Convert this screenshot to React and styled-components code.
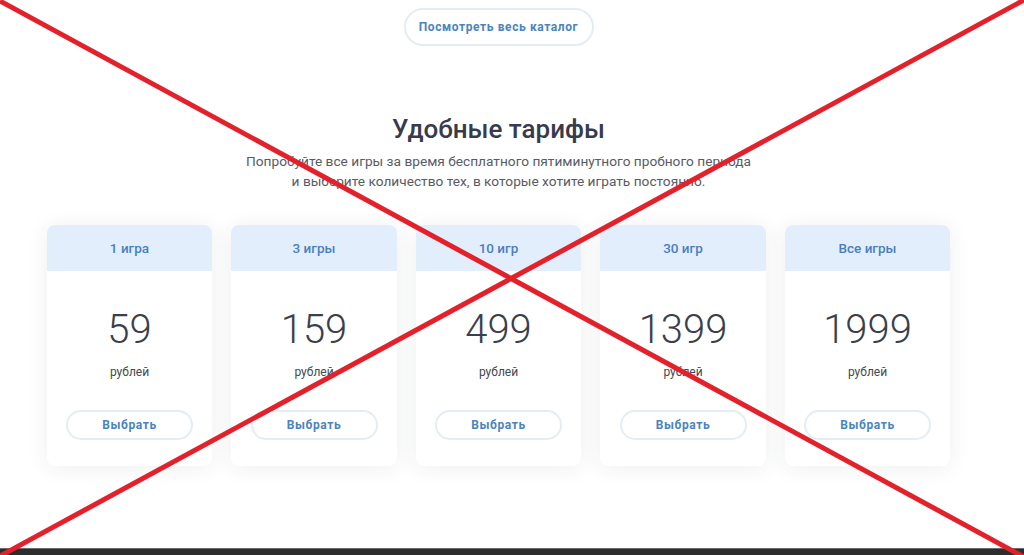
import React from 'react';
import styled, { createGlobalStyle } from 'styled-components';

const GlobalStyle = createGlobalStyle`
  html, body {
    margin: 0;
    padding: 0;
    background: #ffffff;
    font-family: Roboto, "Noto Sans", "Liberation Sans", sans-serif;
  }
`;

const plans = [
  { title: '1 игра', price: 59 },
  { title: '3 игры', price: 159 },
  { title: '10 игр', price: 499 },
  { title: '30 игр', price: 1399 },
  { title: 'Все игры', price: 1999 },
];

const StyledPage = styled.div`
  position: relative;
  width: 1024px;
  height: 555px;
  overflow: hidden;
  display: flex;
  flex-direction: column;
`;

const StyledSection = styled.section`
  width: 997px;
  flex: 1;
  display: flex;
  flex-direction: column;
  align-items: center;
  padding-top: 8px;
`;

const StyledPillButton = styled.button`
  display: flex;
  align-items: center;
  justify-content: center;
  width: ${props => props.$width}px;
  height: ${props => props.$height}px;
  padding: 0;
  background: #ffffff;
  border: 2px solid #e4edf4;
  border-radius: 20px;
  color: #4a84c0;
  font-family: Roboto, "Noto Sans", sans-serif;
  font-size: 12px;
  font-weight: 700;
  letter-spacing: 0.6px;
  cursor: pointer;
`;

const StyledTitle = styled.h2`
  margin: 66px 0 0;
  font-size: 26px;
  line-height: 34px;
  font-weight: 500;
  color: #373b4c;
`;

const StyledLead = styled.p`
  margin: 5px 0 0;
  font-size: 13.7px;
  line-height: 20px;
  color: #575b66;
  text-align: center;
`;

const StyledCards = styled.div`
  display: grid;
  grid-template-columns: repeat(5, 165.5px);
  gap: 19px;
  margin-top: 34px;
`;

const StyledCard = styled.div`
  height: 241px;
  background: #ffffff;
  border-radius: 8px;
  overflow: hidden;
  box-shadow: 0 2px 22px rgba(40, 50, 70, 0.08);
  display: flex;
  flex-direction: column;
  align-items: center;
`;

const StyledCardHead = styled.div`
  align-self: stretch;
  height: 46px;
  display: flex;
  align-items: center;
  justify-content: center;
  background: #e3eefd;
  color: #4a7fbf;
  font-size: 13.5px;
  font-weight: 500;
`;

const StyledPrice = styled.div`
  margin-top: 39px;
  font-size: 40px;
  line-height: 40px;
  font-weight: 300;
  color: #3b3f4d;
`;

const StyledCurrency = styled.div`
  margin-top: 14px;
  font-size: 12px;
  line-height: 16px;
  color: #444850;
`;

const StyledChoose = styled(StyledPillButton)`
  margin-top: 30px;
`;

const StyledFooterBar = styled.div`
  height: 6px;
  background: #2d2d2d;
  border-top: 1px solid #6b6b6b;
`;

const StyledCross = styled.svg`
  position: absolute;
  left: 0;
  top: 0;
  pointer-events: none;
`;

const App = () => (
  <StyledPage>
    <GlobalStyle />
    <StyledSection>
      <StyledPillButton $width={190} $height={38}>Посмотреть весь каталог</StyledPillButton>
      <StyledTitle>Удобные тарифы</StyledTitle>
      <StyledLead>
        Попробуйте все игры за время бесплатного пятиминутного пробного периода
        <br />
        и выберите количество тех, в которые хотите играть постоянно.
      </StyledLead>
      <StyledCards>
        {plans.map(plan => (
          <StyledCard key={plan.title}>
            <StyledCardHead>{plan.title}</StyledCardHead>
            <StyledPrice>{plan.price}</StyledPrice>
            <StyledCurrency>рублей</StyledCurrency>
            <StyledChoose $width={127} $height={30}>Выбрать</StyledChoose>
          </StyledCard>
        ))}
      </StyledCards>
    </StyledSection>
    <StyledFooterBar />
    <StyledCross width="1024" height="555" viewBox="0 0 1024 555">
      <line x1="0" y1="1" x2="1024" y2="557" stroke="#e3212b" strokeWidth="5" />
      <line x1="1024" y1="0" x2="0" y2="556" stroke="#e3212b" strokeWidth="5" />
    </StyledCross>
  </StyledPage>
);

export default App;
